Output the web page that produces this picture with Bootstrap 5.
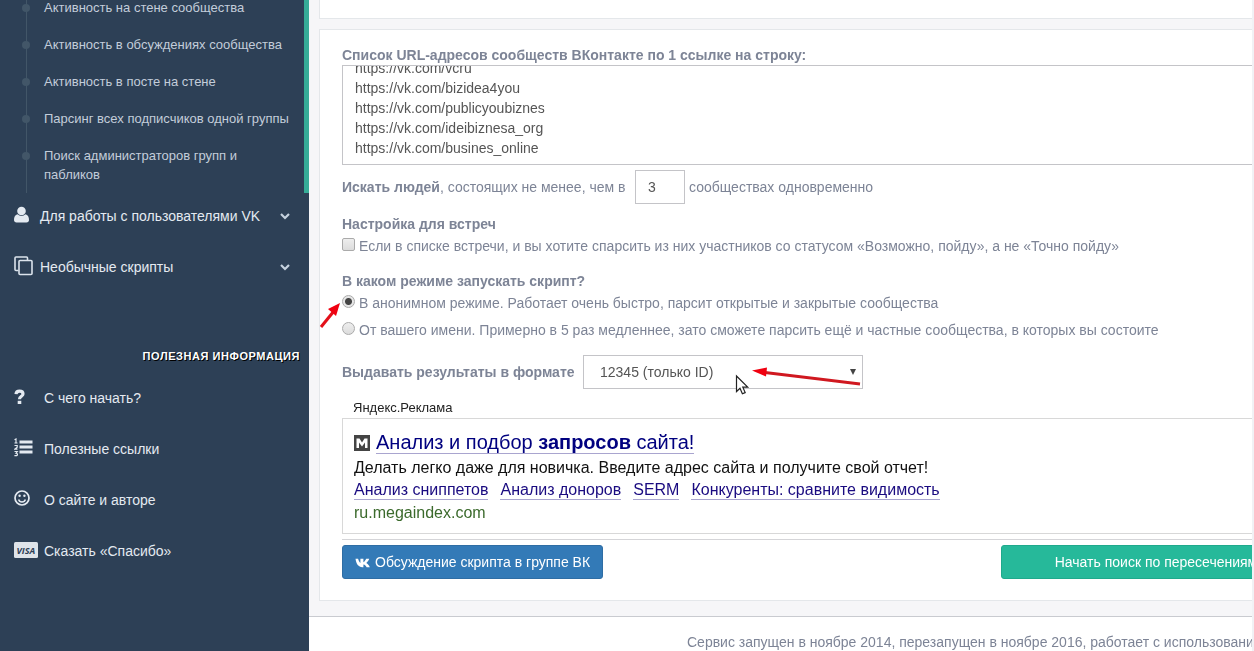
<!DOCTYPE html>
<html lang="ru">
<head>
<meta charset="utf-8">
<meta name="viewport" content="width=device-width, initial-scale=1">
<title>Поиск пересечений сообществ</title>
<link href="https://cdn.jsdelivr.net/npm/bootstrap@5.3.0/dist/css/bootstrap.min.css" rel="stylesheet">
<style>
body{font-family:"Liberation Sans",Arial,sans-serif;font-size:14px;line-height:20px;color:#7d8496;background:#f6f6f8}
.page{min-height:100vh;overflow:hidden}
.side{width:309px;background:#2d4056}
.side a{color:#e4eaf1;text-decoration:none}
.sub-menu{margin-top:-11px;border-right:5px solid #36ac97}
.sub-menu li{position:relative;padding:9px 8px 9px 44px;line-height:19px;font-size:13px}
.side .sub-menu a{color:#c3cdda}
.sub-menu li::before{content:"";position:absolute;left:26px;top:0;bottom:0;width:1px;background:#425668}
.sub-menu li::after{content:"";position:absolute;left:22px;top:15px;width:8px;height:8px;border-radius:50%;background:#425668}
.main-link{height:46px;margin-bottom:5px;padding:0 19px 0 14px}
.main-link svg{flex:none;display:block}
.side-title{font-size:11px;line-height:16px;font-weight:700;letter-spacing:.05em;color:#fff;text-shadow:1px 1px #000;text-align:right;margin:58px 9px 11px 0}
.ico{width:26px;padding-bottom:3px}
.ico-sm{width:30px;padding-bottom:3px}
.work{min-width:0;overflow:hidden;border-right:2px solid #f1f1f5}
.x-panel{background:#fff;border:1px solid #e4e7ea;margin-left:10px;width:calc(100% + 72px)}
.x-panel.upper{height:19px;border-top:0;margin-bottom:10px}
.x-panel.form-panel{padding:15px 22px 21px}
.form-control,.form-select{border-radius:0;border-color:#c4c4c8;font-size:14px;line-height:20px;color:#555;padding:6px 12px;box-shadow:none}
.urls{height:100px;resize:none}
.count-row{margin-top:5px}
.count-row label{width:289px}
.fmt-row label{width:237px}
.count{width:50px;height:34px}
.fmt{width:280px;height:34px;padding-left:16px;background-image:url("data:image/svg+xml,%3Csvg xmlns='http://www.w3.org/2000/svg' viewBox='0 0 6 6'%3E%3Cpath d='M0 0h6L3 6z' fill='%23444'/%3E%3C/svg%3E");background-size:6px 6px;background-position:right 6px center}
.group-a{margin-top:10px}
.group-b{margin-top:15px}
.opt{position:relative;gap:4px;margin-top:2px}
.opt.next{margin-top:7px}
.opt input{appearance:none;width:13px;height:13px;margin:2px 0 0;border:1px solid #aaa;background:linear-gradient(#eee,#dcdcdc);flex:none}
.opt input[type=checkbox]{border-radius:2px}
.opt input[type=radio]{border-radius:50%}
.opt input[type=radio]:checked{background:radial-gradient(circle,#444 0 3px,#e6e6e6 4px)}
.overlay{position:absolute;pointer-events:none}
.ad-mark{font-size:13px;line-height:18px;color:#222;padding-left:11px;margin:10px 0 1px}
.ad-box{border:1px solid #d8d8d8;padding:12px 11px 9px;color:#111;font-size:16px;line-height:22px}
.ad-box a{color:#1a0b80;text-decoration:none;border-bottom:1px solid #a9a5cf}
.ad-title{font-size:20px;line-height:26px;margin-bottom:3px;gap:6px}
.ad-title a{color:#00007f;line-height:22px}
.ad-links{gap:12px;margin-top:2px}
.ad-links a{line-height:18px}
.ad-box .site{color:#3b6a2c;margin-top:2px}
.rule{border-top:1px solid #d5d5d8;margin-top:5px;padding-top:5px}
.btn{height:34px;font-size:14px;line-height:20px;padding:6px 12px;border-radius:3px;color:#fff}
.btn-vk,.btn-vk:hover{background:#337ab7;border-color:#2e6da4}
.btn-run,.btn-run:hover{background:#26b99a;border-color:#1fa98c;width:310px}
.foot{background:#fff;border-top:1px solid #c9cbd0;margin-top:15px;padding:15px 0 0 378px;white-space:nowrap}
</style>
</head>
<body>
<div class="page d-flex">
<nav class="side flex-shrink-0">
  <ul class="sub-menu list-unstyled mb-0">
    <li><a href="#">Активность на стене сообщества</a></li>
    <li><a href="#">Активность в обсуждениях сообщества</a></li>
    <li><a href="#">Активность в посте на стене</a></li>
    <li><a href="#">Парсинг всех подписчиков одной группы</a></li>
    <li><a href="#">Поиск администраторов групп и пабликов</a></li>
  </ul>
  <a href="#" class="main-link d-flex align-items-center"><span class="ico"><svg width="16" height="18" viewBox="0 0 16 18" fill="#e4eaf1"><circle cx="7.500" cy="5" r="4.300"/><path d="M3.600 8.200C1 8.800 0 11 0 14c0 1.600 1 2.500 2.500 2.500h10c1.500 0 2.500-.9 2.500-2.500 0-3-1-5.200-3.600-5.800a5.300 5.300 0 0 1-7.800 0z"/></svg></span><span class="flex-grow-1">Для работы с пользователями VK</span><svg width="10" height="7" viewBox="0 0 10 7" fill="none" stroke="#c6d2df" stroke-width="2.200"><path d="M1 1l4 4 4-4"/></svg></a>
  <a href="#" class="main-link d-flex align-items-center"><span class="ico"><svg width="19" height="20" viewBox="0 0 19 20" fill="none" stroke="#dbe3ec" stroke-width="1.600"><rect x="5" y="4.500" width="13" height="14" rx="1"/><path d="M4.500 14.500H2a1 1 0 0 1-1-1V2a1 1 0 0 1 1-1h10.500a1 1 0 0 1 1 1v2"/></svg></span><span class="flex-grow-1">Необычные скрипты</span><svg width="10" height="7" viewBox="0 0 10 7" fill="none" stroke="#c6d2df" stroke-width="2.200"><path d="M1 1l4 4 4-4"/></svg></a>
  <h3 class="side-title">ПОЛЕЗНАЯ ИНФОРМАЦИЯ</h3>
  <a href="#" class="main-link d-flex align-items-center"><span class="ico-sm"><svg width="12" height="16" viewBox="0 0 12 16" fill="none" stroke="#e4eaf1" stroke-width="3.200"><path d="M2 5.200C2.200 3 3.600 2.200 5.500 2.200S9 3.200 9 5c0 2.400-3.500 2.200-3.500 5.200"/><path d="M5.500 11.800v3.200" stroke-width="3.600"/></svg></span>С чего начать?</a>
  <a href="#" class="main-link d-flex align-items-center"><span class="ico-sm"><svg width="19" height="19" viewBox="0 0 19 19" fill="none" stroke="#e4eaf1"><path d="M5.500 4h13M5.500 9h13M5.500 14h13" stroke-width="3"/><path d="M.5 1.800L2 1v4M.5 5h3M.5 7.500h2.700v1.700L.8 11.200h2.700M.5 13.500h2.800L2 15.200c2 0 1.800 2.400.2 2.400H.4" stroke-width="1.200"/></svg></span>Полезные ссылки</a>
  <a href="#" class="main-link d-flex align-items-center"><span class="ico-sm"><svg width="17" height="17" viewBox="0 0 17 17" fill="none" stroke="#e4eaf1" stroke-width="1.700"><circle cx="8" cy="8" r="7"/><path d="M4.600 9.500c1 3.200 5.800 3.200 6.800 0" stroke-width="1.500"/><circle cx="5.600" cy="5.800" r="1.200" fill="#e4eaf1" stroke="none"/><circle cx="10.400" cy="5.800" r="1.200" fill="#e4eaf1" stroke="none"/></svg></span>О сайте и авторе</a>
  <a href="#" class="main-link d-flex align-items-center"><span class="ico-sm"><svg width="24" height="16" viewBox="0 0 24 16"><rect width="24" height="16" rx="1.500" fill="#dfe4ea"/><text x="2.500" y="12" font-size="9" font-weight="700" font-style="italic" font-family="Open Sans, sans-serif" fill="#2d4056">VISA</text></svg></span>Сказать «Спасибо»</a>
</nav>
<main class="work flex-grow-1 d-flex flex-column">
  <section class="x-panel upper"></section>
  <section class="x-panel form-panel">
    <form>
    <label for="urls" class="fw-bold d-block">Список URL-адресов сообществ ВКонтакте по 1 ссылке на строку:</label>
    <textarea id="urls" class="form-control urls" spellcheck="false">https://vk.com/vcru
https://vk.com/bizidea4you
https://vk.com/publicyoubiznes
https://vk.com/ideibiznesa_org
https://vk.com/busines_online</textarea>
    <div class="count-row d-flex align-items-center gap-1">
      <label for="cnt"><b>Искать людей</b>, состоящих не менее, чем в</label>
      <input id="cnt" class="form-control count" value="3"><span>сообществах одновременно</span>
    </div>
    <div class="group-a fw-bold">Настройка для встреч</div>
    <div class="opt d-flex"><input type="checkbox" id="ev"><label for="ev">Если в списке встречи, и вы хотите спарсить из них участников со статусом «Возможно, пойду», а не «Точно пойду»</label></div>
    <div class="group-b fw-bold">В каком режиме запускать скрипт?</div>
    <div class="opt d-flex"><input type="radio" name="mode" id="m1" checked><label for="m1">В анонимном режиме. Работает очень быстро, парсит открытые и закрытые сообщества</label>
      <svg class="overlay" style="left:-23px;top:8px" width="24" height="28" viewBox="0 0 24 28"><path d="M2 26L15 10" stroke="#e3101a" stroke-width="3"/><path d="M21 2l-4 13-8-7z" fill="#f00010"/></svg></div>
    <div class="opt next d-flex"><input type="radio" name="mode" id="m2"><label for="m2">От вашего имени. Примерно в 5 раз медленнее, зато сможете парсить ещё и частные сообщества, в которых вы состоите</label></div>
    <div class="fmt-row group-b d-flex align-items-center gap-1">
      <label for="fmt" class="fw-bold">Выдавать результаты в формате</label>
      <div class="position-relative"><select id="fmt" class="form-select fmt"><option>12345 (только ID)</option></select>
        <svg class="overlay" style="left:152px;top:10px" width="128" height="34" viewBox="0 0 128 34"><path d="M30 7.500L125 19" stroke="#d01820" stroke-width="3"/><path d="M17 5.500L32 2.500 31 11.500z" fill="#f00010"/><path d="M1.500 11v15.500l3.500-3.300 2.400 5.600 2.800-1.200-2.400-5.400h4.900z" fill="#fff" stroke="#222" stroke-width="1.200"/></svg></div>
    </div>
    <div class="ad-mark">Яндекс.Реклама</div>
    <div class="ad-box">
      <div class="ad-title d-flex align-items-center"><svg width="16" height="16" viewBox="0 0 16 16"><path d="M0 0h16v16H0z" fill="#444"/><path d="M2.500 13V3.500h3L8 7.500l2.500-4h3V13H11V7.500L8 11.500l-3-4V13z" fill="#fff"/></svg><a href="#">Анализ и подбор <b>запросов</b> сайта!</a></div>
      <div>Делать легко даже для новичка. Введите адрес сайта и получите свой отчет!</div>
      <div class="ad-links d-flex align-items-center"><a href="#">Анализ сниппетов</a><a href="#">Анализ доноров</a><a href="#">SERM</a><a href="#">Конкуренты: сравните видимость</a></div>
      <div class="site">ru.megaindex.com</div>
    </div>
    <div class="rule d-flex justify-content-between">
      <button type="button" class="btn btn-vk"><svg class="me-1" width="16" height="10" viewBox="0 0 16 10" fill="#fff"><path d="M.5.800h2.600c.4 1.700 1.400 3.700 2.300 4.100V.8h3v3.400c1.200-.4 2.100-2 2.800-3.400h3c-.5 1.700-1.600 3.200-2.900 4.200 1.500.9 2.700 2.200 3.500 4.200h-3.200C11 7.900 10 6.900 8.400 6.600v2.600h-1C3.500 9.200 1.200 6 .5.800z"/></svg>Обсуждение скрипта в группе ВК</button>
      <button type="button" class="btn btn-run">Начать поиск по пересечениям</button>
    </div>
    </form>
  </section>
  <footer class="foot flex-grow-1">Сервис запущен в ноябре 2014, перезапущен в ноябре 2016, работает с использованием API</footer>
</main>
</div>
<script src="https://cdn.jsdelivr.net/npm/bootstrap@5.3.0/dist/js/bootstrap.bundle.min.js"></script>
<script>
const urls=document.getElementById('urls');urls.scrollTop=urls.scrollHeight;
</script>
</body>
</html>
